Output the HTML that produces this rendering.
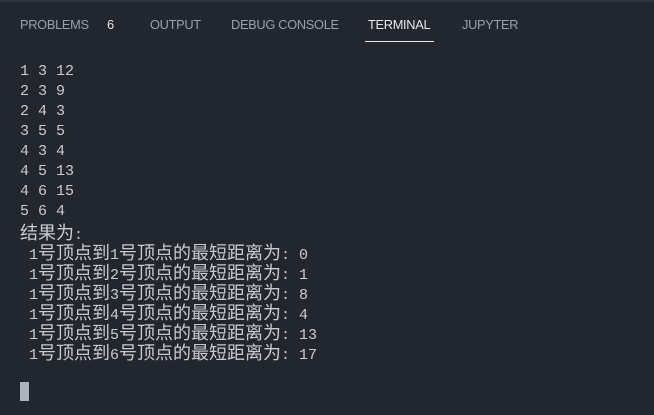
<!DOCTYPE html>
<html><head><meta charset="utf-8"><style>
body{margin:0;width:654px;height:415px;background:#22262e;overflow:hidden;position:relative;font-family:"Liberation Sans",sans-serif}
.top{position:absolute;left:0;top:0;width:654px;height:2px;background:#2e323a}
.tab{position:absolute;top:17px;font-size:12.8px;color:#9aa0aa;letter-spacing:-0.3px}
.act{color:#e6e8ec}
.ul{position:absolute;left:365px;top:41px;width:69px;height:1px;background:#e6e8ec}
.l{position:absolute;left:20px;height:20px;white-space:pre;font:15px/20px "Liberation Mono","Noto Sans CJK SC",monospace;color:#c8ccd2}
.l b{font-weight:normal;font-size:18px;font-family:"Noto Sans CJK SC",sans-serif}
.cur{position:absolute;left:20px;top:382px;width:9px;height:19px;background:#aeb3bb}
</style></head><body>
<div class="top"></div>
<div class="tab" style="left:20px">PROBLEMS</div>
<div class="tab act" style="left:107px">6</div>
<div class="tab" style="left:150px">OUTPUT</div>
<div class="tab" style="left:231px">DEBUG CONSOLE</div>
<div class="tab act" style="left:368px">TERMINAL</div>
<div class="tab" style="left:462px">JUPYTER</div>
<div class="ul"></div>
<div class="l" style="top:62px">1 3 12</div>
<div class="l" style="top:82px">2 3 9</div>
<div class="l" style="top:102px">2 4 3</div>
<div class="l" style="top:122px">3 5 5</div>
<div class="l" style="top:142px">4 3 4</div>
<div class="l" style="top:162px">4 5 13</div>
<div class="l" style="top:182px">4 6 15</div>
<div class="l" style="top:202px">5 6 4</div>
<div class="l" style="top:222px"><b>结果为</b>:</div>
<div class="l" style="top:242px"> 1<b>号顶点到</b>1<b>号顶点的最短距离为</b>: 0</div>
<div class="l" style="top:262px"> 1<b>号顶点到</b>2<b>号顶点的最短距离为</b>: 1</div>
<div class="l" style="top:282px"> 1<b>号顶点到</b>3<b>号顶点的最短距离为</b>: 8</div>
<div class="l" style="top:302px"> 1<b>号顶点到</b>4<b>号顶点的最短距离为</b>: 4</div>
<div class="l" style="top:322px"> 1<b>号顶点到</b>5<b>号顶点的最短距离为</b>: 13</div>
<div class="l" style="top:342px"> 1<b>号顶点到</b>6<b>号顶点的最短距离为</b>: 17</div>
<div class="cur"></div>
</body></html>
